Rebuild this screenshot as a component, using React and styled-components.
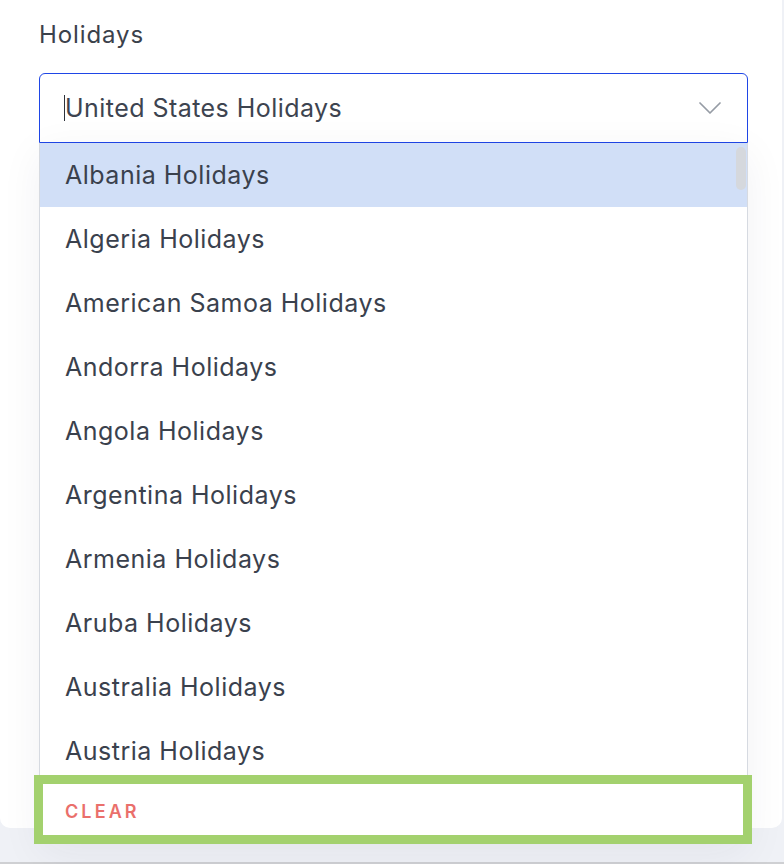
import React from "react";
import styled, { createGlobalStyle } from "styled-components";

const GlobalStyle = createGlobalStyle`
  html, body { margin: 0; padding: 0; }
  body {
    background: #eff1f6;
    font-family: Inter, "Open Sans", Arial, sans-serif;
  }
`;

const Page = styled.div`
  position: relative;
  width: 784px;
  height: 864px;
  overflow: hidden;
  display: flex;
  flex-direction: column;
`;

const Card = styled.div`
  height: 828px;
  margin-right: 2px;
  background: #ffffff;
  border-radius: 0 0 10px 10px;
  padding: 20px 0 0 39px;
  box-sizing: border-box;
`;

const Spacer = styled.div`
  flex: 1;
`;

const BottomLine = styled.div`
  height: 2px;
  background: #cfd0d3;
`;

const Label = styled.div`
  font-size: 24px;
  letter-spacing: 0.9px;
  color: #3b414b;
  line-height: 30px;
  margin-bottom: 23px;
`;

const Select = styled.div`
  position: relative;
  width: 709px;
`;

const Control = styled.div`
  height: 70px;
  box-sizing: border-box;
  border: 1px solid #1f46e6;
  border-radius: 6px 6px 0 0;
  display: flex;
  align-items: center;
  padding: 0 26px 0 24px;
`;

const Caret = styled.span`
  width: 1px;
  height: 26px;
  background: #2c313a;
`;

const Value = styled.span`
  flex: 1;
  font-size: 25px;
  letter-spacing: 0.45px;
  color: #3d4450;
`;

const Menu = styled.div`
  position: absolute;
  top: 100%;
  left: 0;
  width: 709px;
  box-shadow: 0 10px 40px rgba(30, 40, 70, 0.06);
`;

const List = styled.div`
  position: relative;
  height: 640px;
  overflow: hidden;
  border-left: 1px solid #d6dae1;
  border-right: 1px solid #d6dae1;
  background: #fff;
`;

const Option = styled.div`
  height: 64px;
  display: flex;
  align-items: center;
  padding: 0 0 1px 25px;
  box-sizing: border-box;
  font-size: 25px;
  letter-spacing: 0.5px;
  color: #3a414d;
  background: ${(p) => (p.$active ? "#d1dff7" : "#ffffff")};
`;

const Thumb = styled.div`
  position: absolute;
  top: 4px;
  right: 1px;
  width: 10px;
  height: 43px;
  border-radius: 5px;
  background: #d5d8dd;
`;

const ClearHighlight = styled.div`
  margin: -8px -4px 0 -5px;
  border: 9px solid #a3d16e;
  background: #ffffff;
  position: relative;
`;

const ClearRow = styled.div`
  height: 51px;
  display: flex;
  align-items: center;
  padding: 3px 0 0 22px;
  box-sizing: border-box;
  font-size: 18px;
  font-weight: 600;
  letter-spacing: 3.1px;
  color: #ea6f6b;
`;

const items = [
  "Albania Holidays",
  "Algeria Holidays",
  "American Samoa Holidays",
  "Andorra Holidays",
  "Angola Holidays",
  "Argentina Holidays",
  "Armenia Holidays",
  "Aruba Holidays",
  "Australia Holidays",
  "Austria Holidays",
];

function Chevron() {
  return (
    <svg width="22" height="12" viewBox="0 0 22 12" fill="none">
      <polyline
        points="1,1 11,11 21,1"
        stroke="#969ca5"
        strokeWidth="1.7"
        strokeLinecap="round"
        strokeLinejoin="round"
      />
    </svg>
  );
}

export default function App() {
  return (
    <>
      <GlobalStyle />
      <Page>
        <Card>
          <Label>Holidays</Label>
          <Select>
            <Control>
              <Caret />
              <Value>United States Holidays</Value>
              <Chevron />
            </Control>
            <Menu>
              <List>
                {items.map((t, i) => (
                  <Option key={t} $active={i === 0}>
                    {t}
                  </Option>
                ))}
                <Thumb />
              </List>
              <ClearHighlight>
                <ClearRow>CLEAR</ClearRow>
              </ClearHighlight>
            </Menu>
          </Select>
        </Card>
        <Spacer />
        <BottomLine />
      </Page>
    </>
  );
}
